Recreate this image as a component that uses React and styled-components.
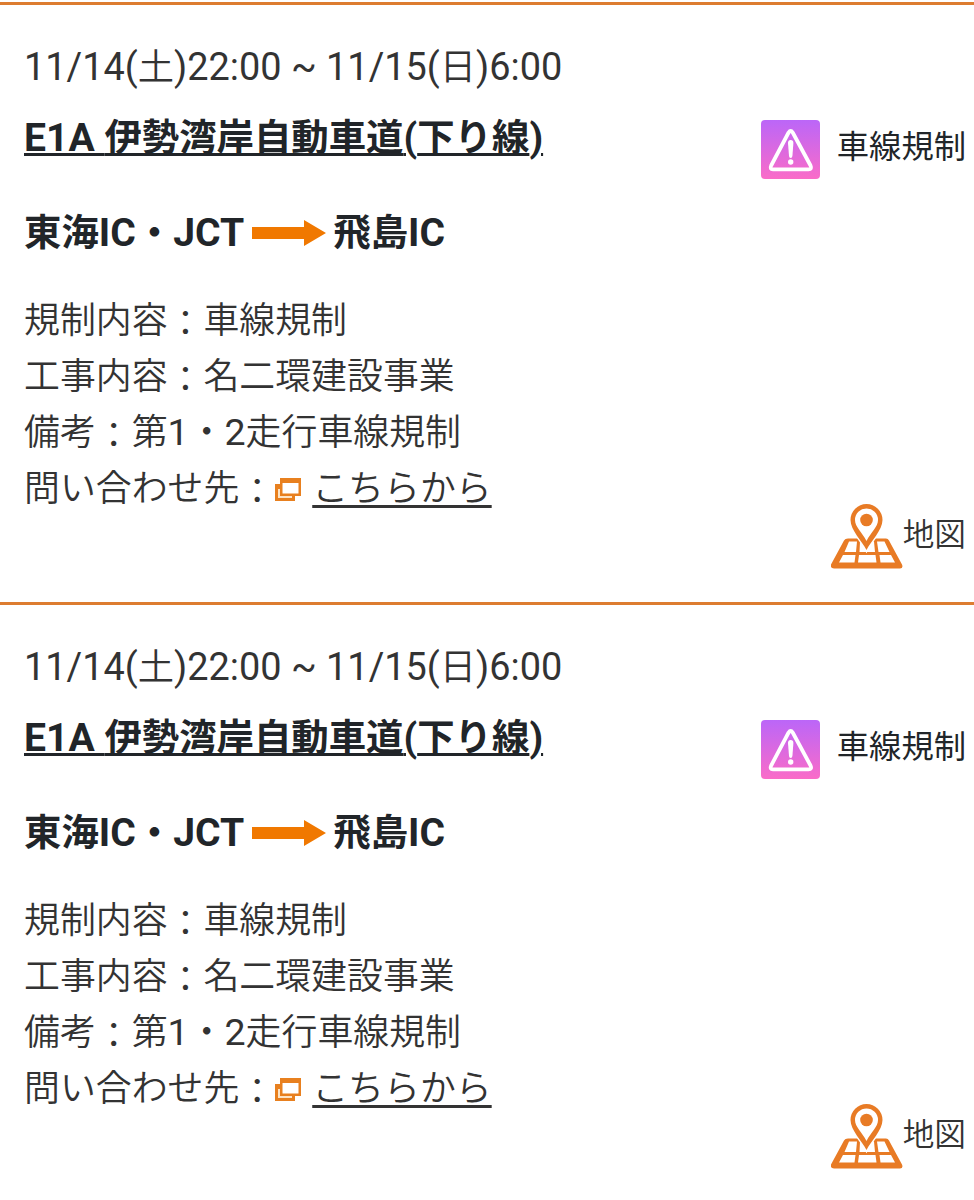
import React from "react";
import styled, { createGlobalStyle } from "styled-components";

const GlobalStyle = createGlobalStyle`
    body {
        margin: 0;
        background-color: #fff;
        color: #333;
        font-family: Roboto, "Noto Sans CJK JP", sans-serif;
    }
`;

const List = styled.main`
    height: 1200px;
    padding-top: 2px;
    box-sizing: border-box;
    overflow: hidden;
`;

const Item = styled.article`
    display: flex;
    justify-content: space-between;
    height: 600px;
    box-sizing: border-box;
    border-top: 3px solid #dd7c30;
    padding: 28px 8px 33px 24px;
`;

const Info = styled.div`
    white-space: nowrap;
`;

const Latin = styled.span`
    font-size: 1.045em;
    line-height: 1;
`;

const Colon = styled.span`
    line-height: 1;
    vertical-align: -3px;
`;

const Period = styled.p`
    margin: 0;
    font-size: 36.25px;
    font-weight: 350;
    line-height: 70px;

    ${Latin} {
        font-weight: 400;
    }
`;

const Road = styled.a`
    display: block;
    color: #212529;
    font-size: 37.4px;
    font-weight: bold;
    line-height: 70px;
    text-decoration: underline;
    text-decoration-thickness: 3px;
    text-underline-offset: 2px;
`;

const Section = styled.h3`
    display: flex;
    align-items: center;
    margin: 25px 0;
    color: #212529;
    font-size: 37.4px;
    line-height: 70px;
`;

const Detail = styled.p`
    margin: 0;
    font-size: 35.9px;
    font-weight: 350;
    line-height: 56px;

    ${Latin} {
        font-weight: 400;
    }

    svg {
        vertical-align: -1px;
    }
`;

const DetailLink = styled.a`
    margin-left: 11px;
    text-decoration: underline;
    text-decoration-thickness: 3px;
    text-underline-offset: 4px;
    text-decoration-skip-ink: none;
`;

const Side = styled.div`
    display: flex;
    flex-direction: column;
    justify-content: space-between;
    align-items: flex-end;
    padding-top: 87px;
`;

const Badge = styled.div`
    display: flex;
    gap: 17px;
    color: #212529;
    font-size: 32.3px;
    line-height: 55px;
`;

const MapLink = styled.a`
    display: flex;
    font-size: 31.7px;
    font-weight: 350;
    line-height: 63px;
`;

const ArrowIcon = () => (
    <svg width="74" height="26" viewBox="0 0 74 26" style={{ margin: "0 7px 0 8px" }}>
        <path d="M0 7h52V0l22 13-22 13v-7H0z" fill="#f07800" />
    </svg>
);

const WindowIcon = () => (
    <svg width="26" height="24" viewBox="0 0 26 24">
        <path d="M0 6h20v17H0z" fill="#e8801f" />
        <path d="M3 11h14v9H3z" fill="#fde3c4" />
        <path d="M5 0h21v18H5z" fill="#e8801f" />
        <path d="M7.5 5h16v10.5h-16z" fill="#fff" />
    </svg>
);

const WarningIcon = () => (
    <svg width="59" height="59" viewBox="0 0 59 59">
        <defs>
            <linearGradient id="laneBadge" x1="0" y1="0" x2="0" y2="1">
                <stop offset="0" stopColor="#bb66f8" />
                <stop offset="1" stopColor="#fa6cc8" />
            </linearGradient>
        </defs>
        <rect width="59" height="59" rx="4" fill="url(#laneBadge)" />
        <path
            d="M27.6 12.5 10.2 45.5Q8.5 49.3 12 49.3H47.5Q51.3 49.3 49.5 45.5L31.7 12.5Q29.7 9.5 27.6 12.5z"
            fill="none"
            stroke="#fff"
            strokeWidth="3.8"
            strokeLinejoin="round"
        />
        <path d="M27 23q0-3 2.7-3t2.7 3l-1 13q-.2 2-1.7 2t-1.7-2z" fill="#fff" />
        <circle cx="29.7" cy="42" r="2.7" fill="#fff" />
    </svg>
);

const MapIcon = () => (
    <svg width="72" height="65" viewBox="0 0 72 65">
        <path
            d="M17 34.5h38q2 0 3 2l13 24q1.5 4-2 4H3q-4 0-3-4l13-24q1-2 4-2z"
            fill="#e87b25"
        />
        <path
            d="M18 37.5h8l-1 10.5H13.5zM29 37.5h14l1 10.5H28.500zM46 37.5h7.500l5 10.500H47.500zM12 51h12.500l-1 7.500H8zM28 51h16.500l1 7.500h-18.500zM48.500 51h11.500l4 7.500H49.500z"
            fill="#fff"
        />
        <path
            d="M35.500 46C31 37 19.500 26 19.500 16a16 16 0 0 1 32 0c0 10-11.500 21-16 30z"
            fill="#e87b25"
            stroke="#fff"
            strokeWidth="3"
            paintOrder="stroke"
        />
        <path d="M35.500 37C31 28 24 23 24 16a11.500 11.500 0 0 1 23 0c0 7-7 12-11.500 21z" fill="#fff" />
        <circle cx="35.500" cy="16" r="6.300" fill="#e87b25" />
    </svg>
);

const regulations = [
    {
        id: 1,
        period: "11/14(土)22:00 ~ 11/15(日)6:00",
        road: "E1A 伊勢湾岸自動車道(下り線)",
        from: "東海IC・JCT",
        to: "飛島IC",
        type: "車線規制",
        work: "名二環建設事業",
        note: "第1・2走行車線規制",
    },
    {
        id: 2,
        period: "11/14(土)22:00 ~ 11/15(日)6:00",
        road: "E1A 伊勢湾岸自動車道(下り線)",
        from: "東海IC・JCT",
        to: "飛島IC",
        type: "車線規制",
        work: "名二環建設事業",
        note: "第1・2走行車線規制",
    },
];

// latin letters and digits are set slightly larger than the kanji
const Mixed = ({ text }) => (
    <span>
        {text
            .split(/([\x20-\x7e]+)/)
            .map((part, i) => (i % 2 ? <Latin key={i}>{part}</Latin> : part))}
    </span>
);

const Regulation = ({ item }) => {
    return (
        <Item>
            <Info>
                <Period>
                    <Mixed text={item.period} />
                </Period>
                <Road>
                    <Mixed text={item.road} />
                </Road>
                <Section>
                    <Mixed text={item.from} />
                    <ArrowIcon />
                    <Mixed text={item.to} />
                </Section>
                <Detail>
                    規制内容<Colon>：</Colon>
                    {item.type}
                </Detail>
                <Detail>
                    工事内容<Colon>：</Colon>
                    {item.work}
                </Detail>
                <Detail>
                    備考<Colon>：</Colon>
                    <Mixed text={item.note} />
                </Detail>
                <Detail>
                    問い合わせ先<Colon>：</Colon>
                    <WindowIcon />
                    <DetailLink>こちらから</DetailLink>
                </Detail>
            </Info>
            <Side>
                <Badge>
                    <WarningIcon />
                    {item.type}
                </Badge>
                <MapLink>
                    <MapIcon />
                    地図
                </MapLink>
            </Side>
        </Item>
    );
};

const App = () => {
    return (
        <>
            <GlobalStyle />
            <List lang="ja">
                {regulations.map((item) => (
                    <Regulation key={item.id} item={item} />
                ))}
            </List>
        </>
    );
};

export default App;
